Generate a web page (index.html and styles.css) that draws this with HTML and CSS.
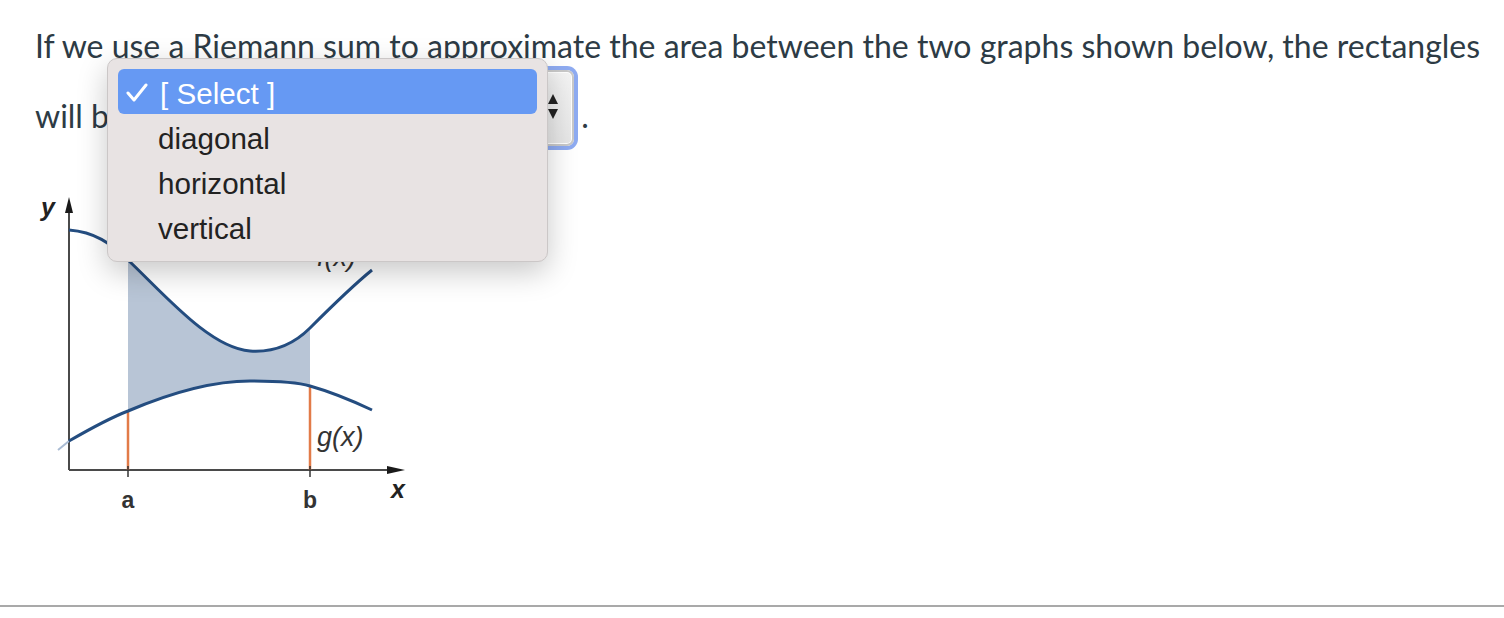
FILE: index.html
```html
<!DOCTYPE html>
<html lang="en">
<head>
<meta charset="utf-8">
<title>Riemann sum question</title>
<link rel="stylesheet" href="styles.css">
</head>
<body>
<div class="question">
  <p class="prompt">If we use a Riemann sum to approximate the area between the two graphs shown below, the rectangles will be <span class="select-box"><span class="arrows"><span class="up"></span><span class="down"></span></span></span><span class="dot">.</span></p>
  <div class="figure">
    <svg width="390" height="340" viewBox="0 0 390 340" xmlns="http://www.w3.org/2000/svg">
      <path class="shade" d="M93,72 C130,107 175,160 215,163 C245,165 265,150 275,140 L275,198 C265,195 245,193 215,193 C180,193 140,203 93,223 Z"/>
      <line class="axis" x1="34" y1="282" x2="34" y2="22"/>
      <polygon class="arrow" points="34,9 30,25 38,25"/>
      <line class="axis" x1="34" y1="282" x2="356" y2="282"/>
      <polygon class="arrow" points="370,282 352,278 352,286"/>
      <line class="orange" x1="93" y1="223" x2="93" y2="282"/>
      <line class="orange" x1="275" y1="198" x2="275" y2="282"/>
      <line class="tick" x1="93" y1="278" x2="93" y2="289"/>
      <line class="tick" x1="275" y1="278" x2="275" y2="289"/>
      <path class="curve" d="M34,42 C60,44 75,55 93,72 C130,107 175,160 215,163 C245,165 265,150 275,140 C295,120 315,100 337,82"/>
      <path class="curve faint" d="M23,262 L34,253"/>
      <path class="curve" d="M34,253 C60,238 80,228 93,223 C140,203 180,193 215,193 C245,193 265,195 275,198 C300,205 320,214 337,222"/>
      <text class="lbl" x="93" y="320">a</text>
      <text class="lbl" x="275" y="320">b</text>
      <text class="var" x="363" y="310">x</text>
      <text class="var" x="13" y="28">y</text>
      <text class="fn" x="282" y="258">g(x)</text>
      <text class="fn" x="282" y="78">f(x)</text>
    </svg>
  </div>
</div>
<hr class="rule">

<div class="popup">
  <div class="option selected"><span class="check"><svg width="22" height="20" viewBox="0 0 22 20"><polyline points="2,10 8,17 20,2" fill="none" stroke="#ffffff" stroke-width="3" stroke-linecap="round" stroke-linejoin="round"/></svg></span><span class="label">[ Select ]</span></div>
  <div class="option"><span class="check"></span><span class="label">diagonal</span></div>
  <div class="option"><span class="check"></span><span class="label">horizontal</span></div>
  <div class="option"><span class="check"></span><span class="label">vertical</span></div>
</div>
</body>
</html>
```

FILE: styles.css
```css
html, body {
  margin: 0;
  padding: 0;
  background: #ffffff;
}

body {
  font-family: "Lato", "Liberation Sans", sans-serif;
  color: #2d3b45;
  width: 1504px;
  height: 618px;
  overflow: hidden;
  position: relative;
}

.question {
  padding: 22px 20px 0 35px;
}

.prompt {
  margin: 0;
  font-size: 32px;
  line-height: 48px;
}

.select-box {
  display: inline-block;
  box-sizing: border-box;
  width: 440px;
  height: 76px;
  vertical-align: -18px;
  overflow: hidden;
  border: 2px solid #c9c9c9;
  border-radius: 7px;
  background: linear-gradient(#f4f4f4, #e6e6e6);
  box-shadow: 0 0 0 4px #8eabf1, inset 0 0 0 1px #ffffff;
  position: relative;
}

.arrows {
  position: absolute;
  right: 14px;
  top: 22px;
  display: flex;
  flex-direction: column;
  gap: 5px;
}

.up {
  width: 0;
  height: 0;
  border-left: 5px solid transparent;
  border-right: 5px solid transparent;
  border-bottom: 10px solid #222;
}

.down {
  width: 0;
  height: 0;
  border-left: 5px solid transparent;
  border-right: 5px solid transparent;
  border-top: 10px solid #222;
}

.dot {
  margin-left: 7px;
}

.figure {
  margin-top: 42px;
  height: 340px;
}

.figure svg {
  display: block;
}

.shade {
  fill: #b8c5d6;
}

.axis {
  stroke: #4a4a4a;
  stroke-width: 2;
}

.arrow {
  fill: #1a1a1a;
}

.tick {
  stroke: #333;
  stroke-width: 1.5;
}

.orange {
  stroke: #e27b48;
  stroke-width: 2.5;
}

.curve {
  fill: none;
  stroke: #244d80;
  stroke-width: 3;
}

.faint {
  stroke: #a9bbd3;
  stroke-width: 2;
}

.lbl {
  font-family: "Liberation Sans", sans-serif;
  font-weight: bold;
  font-size: 23px;
  fill: #333;
  text-anchor: middle;
}

.var {
  font-family: "Liberation Sans", sans-serif;
  font-weight: bold;
  font-style: italic;
  font-size: 25px;
  fill: #222;
  text-anchor: middle;
}

.fn {
  font-family: "Liberation Sans", sans-serif;
  font-style: italic;
  font-size: 27px;
  fill: #333;
}

.rule {
  margin: 0;
  border: 0;
  height: 2px;
  background: #a9a9a9;
  position: absolute;
  left: 0;
  right: 0;
  top: 605px;
}

.popup {
  position: absolute;
  left: 107px;
  top: 58px;
  width: 441px;
  box-sizing: border-box;
  padding: 10px 10px 12px;
  background: #e8e3e3;
  border: 1px solid #cbc7c7;
  border-radius: 10px;
  box-shadow: 0 10px 30px rgba(0, 0, 0, 0.22);
  font-family: "Liberation Sans", "Helvetica", sans-serif;
  font-size: 29.6px;
  color: #222222;
}

.option {
  height: 45px;
  display: flex;
  align-items: center;
  border-radius: 6px;
}

.option.selected {
  background: #6699f3;
  color: #ffffff;
}

.check {
  width: 32px;
  padding-left: 8px;
  display: flex;
  align-items: center;
  padding-top: 2px;
}

.label {
  padding-top: 4px;
}

.selected .label {
  padding-left: 2px;
}
```
